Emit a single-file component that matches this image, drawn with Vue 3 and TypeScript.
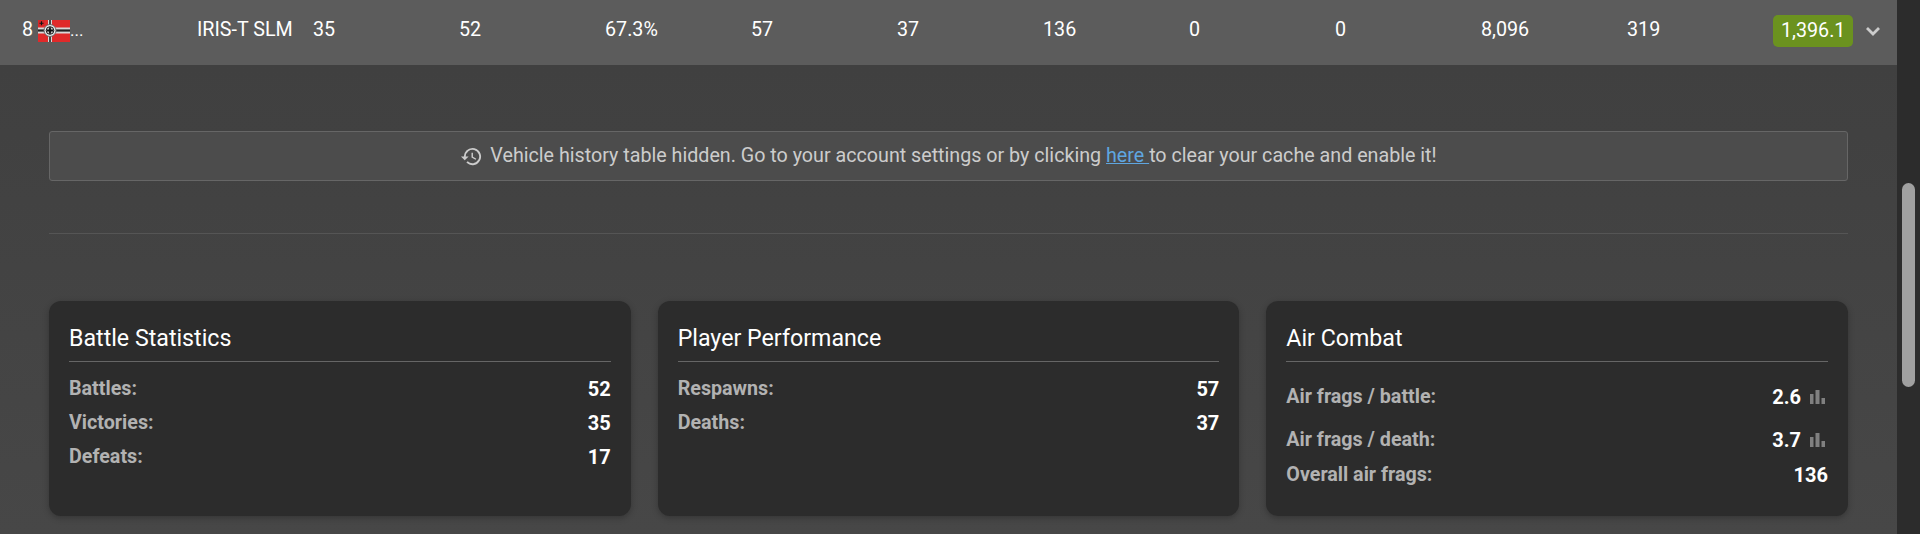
<script setup lang="ts">
interface StatRow {
  label: string
  value: string
  chart?: boolean
}

interface StatCard {
  title: string
  rows: StatRow[]
}

const cells = ['35', '52', '67.3%', '57', '37', '136', '0', '0', '8,096', '319']

const cards: StatCard[] = [
  {
    title: 'Battle Statistics',
    rows: [
      { label: 'Battles:', value: '52' },
      { label: 'Victories:', value: '35' },
      { label: 'Defeats:', value: '17' },
    ],
  },
  {
    title: 'Player Performance',
    rows: [
      { label: 'Respawns:', value: '57' },
      { label: 'Deaths:', value: '37' },
    ],
  },
  {
    title: 'Air Combat',
    rows: [
      { label: 'Air frags / battle:', value: '2.6', chart: true },
      { label: 'Air frags / death:', value: '3.7', chart: true },
      { label: 'Overall air frags:', value: '136' },
    ],
  },
]
</script>

<template>
  <div class="page">
    <main class="content">
      <div class="row">
        <div class="rank">
          <span class="lifted">8</span>
          <svg class="flag" viewBox="0 0 32 22" width="32" height="22">
            <rect width="32" height="22" fill="#e02a2a" />
            <rect x="10" width="4" height="22" fill="#d8d8d8" />
            <rect x="11.2" width="1.6" height="22" fill="#222" />
            <rect y="7.5" width="32" height="6" fill="#d8d8d8" />
            <rect y="9.4" width="32" height="2.2" fill="#222" />
            <circle cx="12" cy="10.5" r="6" fill="#e8e8e8" stroke="#666" />
            <circle cx="12" cy="10.5" r="3.8" fill="#c8c8c8" stroke="#222" />
            <path d="M12 7.2v6.6M8.7 10.5h6.6" stroke="#111" stroke-width="1.8" />
            <path d="M0 0h6.5v6H0z" fill="#d42828" />
            <path d="M3.5 1.2v4M1.5 3.2h4" stroke="#111" stroke-width="1.1" />
          </svg>
          <span class="dots lifted">...</span>
        </div>
        <div class="lifted">IRIS-T SLM</div>
        <div v-for="(cell, i) in cells" :key="i" class="lifted">{{ cell }}</div>
        <div class="rating">
          <span class="badge">1,396.1</span>
          <svg class="chevron" viewBox="0 0 16 10" width="16" height="10">
            <path d="M2 2l6 6 6-6" fill="none" stroke="#ccc" stroke-width="2.8" />
          </svg>
        </div>
      </div>

      <section class="panel">
        <div class="notice">
          <svg class="history" viewBox="0 0 24 24" width="23" height="23">
            <path
              d="M13 3a9 9 0 0 0-9 9H1l3.9 3.9.1.1L9 12H6a7 7 0 1 1 2.05 4.95l-1.42 1.42A9 9 0 1 0 13 3zm-1 5v5l4.25 2.52.77-1.28-3.52-2.09V8H12z"
              fill="#ccc"
            />
          </svg>
          <span class="notice-text">Vehicle history table hidden. Go to your account settings or by clicking <a class="link" href="#">here </a>to clear your cache and enable it!</span>
        </div>

        <hr class="divider" />

        <div class="cards">
          <article v-for="card in cards" :key="card.title" class="card">
            <h3 class="card-title">{{ card.title }}</h3>
            <div
              v-for="row in card.rows"
              :key="row.label"
              class="stat"
              :class="{ 'stat-chart': row.chart }"
            >
              <span class="stat-label">{{ row.label }}</span>
              <span class="stat-value">
                {{ row.value }}
                <svg v-if="row.chart" class="bars" viewBox="0 0 15 14" width="15" height="14">
                  <path d="M0 4h3.5v10H0zM5.5 0h4v14h-4zM11.5 8H15v6h-3.5z" fill="#808080" />
                </svg>
              </span>
            </div>
          </article>
        </div>
      </section>
    </main>

    <aside class="scrollbar">
      <div class="thumb"></div>
    </aside>
  </div>
</template>

<style scoped>
.page {
  display: flex;
  height: 534px;
  overflow: hidden;
  font-family: Roboto, "Liberation Sans", sans-serif;
  background: #2c2c2c;
}

.content {
  width: 1897px;
  flex: none;
  background: linear-gradient(180deg, #3f3f3f 0%, #474747 100%);
}

.row {
  display: grid;
  grid-template-columns: 175px 116px repeat(10, 146px) 1fr;
  align-items: center;
  height: 65px;
  padding: 0 0 3px 22px;
  box-sizing: border-box;
  background: #5c5c5c;
  color: #fff;
  font-size: 19.7px;
}

.rank {
  display: flex;
  align-items: center;
  gap: 5px;
}

.lifted {
  padding-bottom: 3px;
}

.flag {
  flex: none;
}

.dots {
  margin-left: -5px;
  font-size: 17px;
}

.rating {
  display: flex;
  align-items: center;
  gap: 12px;
}

.badge {
  display: inline-block;
  padding: 0 8px;
  height: 32px;
  line-height: 31px;
  border-radius: 5px;
  background: #6b921f;
  color: #fff;
}

.panel {
  padding: 66px 49px 0;
}

.notice {
  display: flex;
  align-items: center;
  justify-content: center;
  gap: 7px;
  height: 50px;
  box-sizing: border-box;
  border: 1px solid #666;
  border-radius: 3px;
  background: #4c4c4c;
  color: #ccc;
  font-size: 19.7px;
}

.notice-text {
  padding-bottom: 2px;
}

.link {
  color: #5fa6e0;
  text-decoration: underline;
}

.divider {
  height: 1px;
  margin: 52px 0 67px;
  border: 0;
  background: #555;
}

.cards {
  display: grid;
  grid-template-columns: repeat(3, 1fr);
  gap: 27px;
}

.card {
  height: 215px;
  padding: 20px;
  box-sizing: border-box;
  border-radius: 12px;
  background: #2c2c2c;
  box-shadow: 0 2px 6px rgba(0, 0, 0, 0.25);
}

.card-title {
  margin: 0 0 10px;
  padding: 3px 0 8px;
  border-bottom: 1px solid #666;
  color: #fff;
  font-size: 23.2px;
  font-weight: 400;
  line-height: 29px;
}

.stat {
  display: flex;
  align-items: center;
  justify-content: space-between;
  height: 34px;
}

.stat-chart {
  height: 38px;
  margin-top: 5px;
}

/* title margin collapses with this one */
.stat-chart:first-of-type {
  margin-top: 16px;
}

.stat-chart + .stat:not(.stat-chart) {
  margin-top: -1px;
}

.stat-label {
  padding-bottom: 1px;
  color: #b2b2b2;
  font-size: 19.7px;
  font-weight: 700;
}

.stat-value {
  display: flex;
  align-items: center;
  gap: 9px;
  color: #fff;
  font-size: 20px;
  font-weight: 700;
}

.bars {
  margin-right: 3px;
}

.scrollbar {
  flex: 1;
  background: #2c2c2c;
}

.thumb {
  width: 13px;
  height: 204px;
  margin: 183px 0 0 5px;
  border-radius: 7px;
  background: #a0a0a0;
}
</style>

<style>
body {
  margin: 0;
}
</style>
